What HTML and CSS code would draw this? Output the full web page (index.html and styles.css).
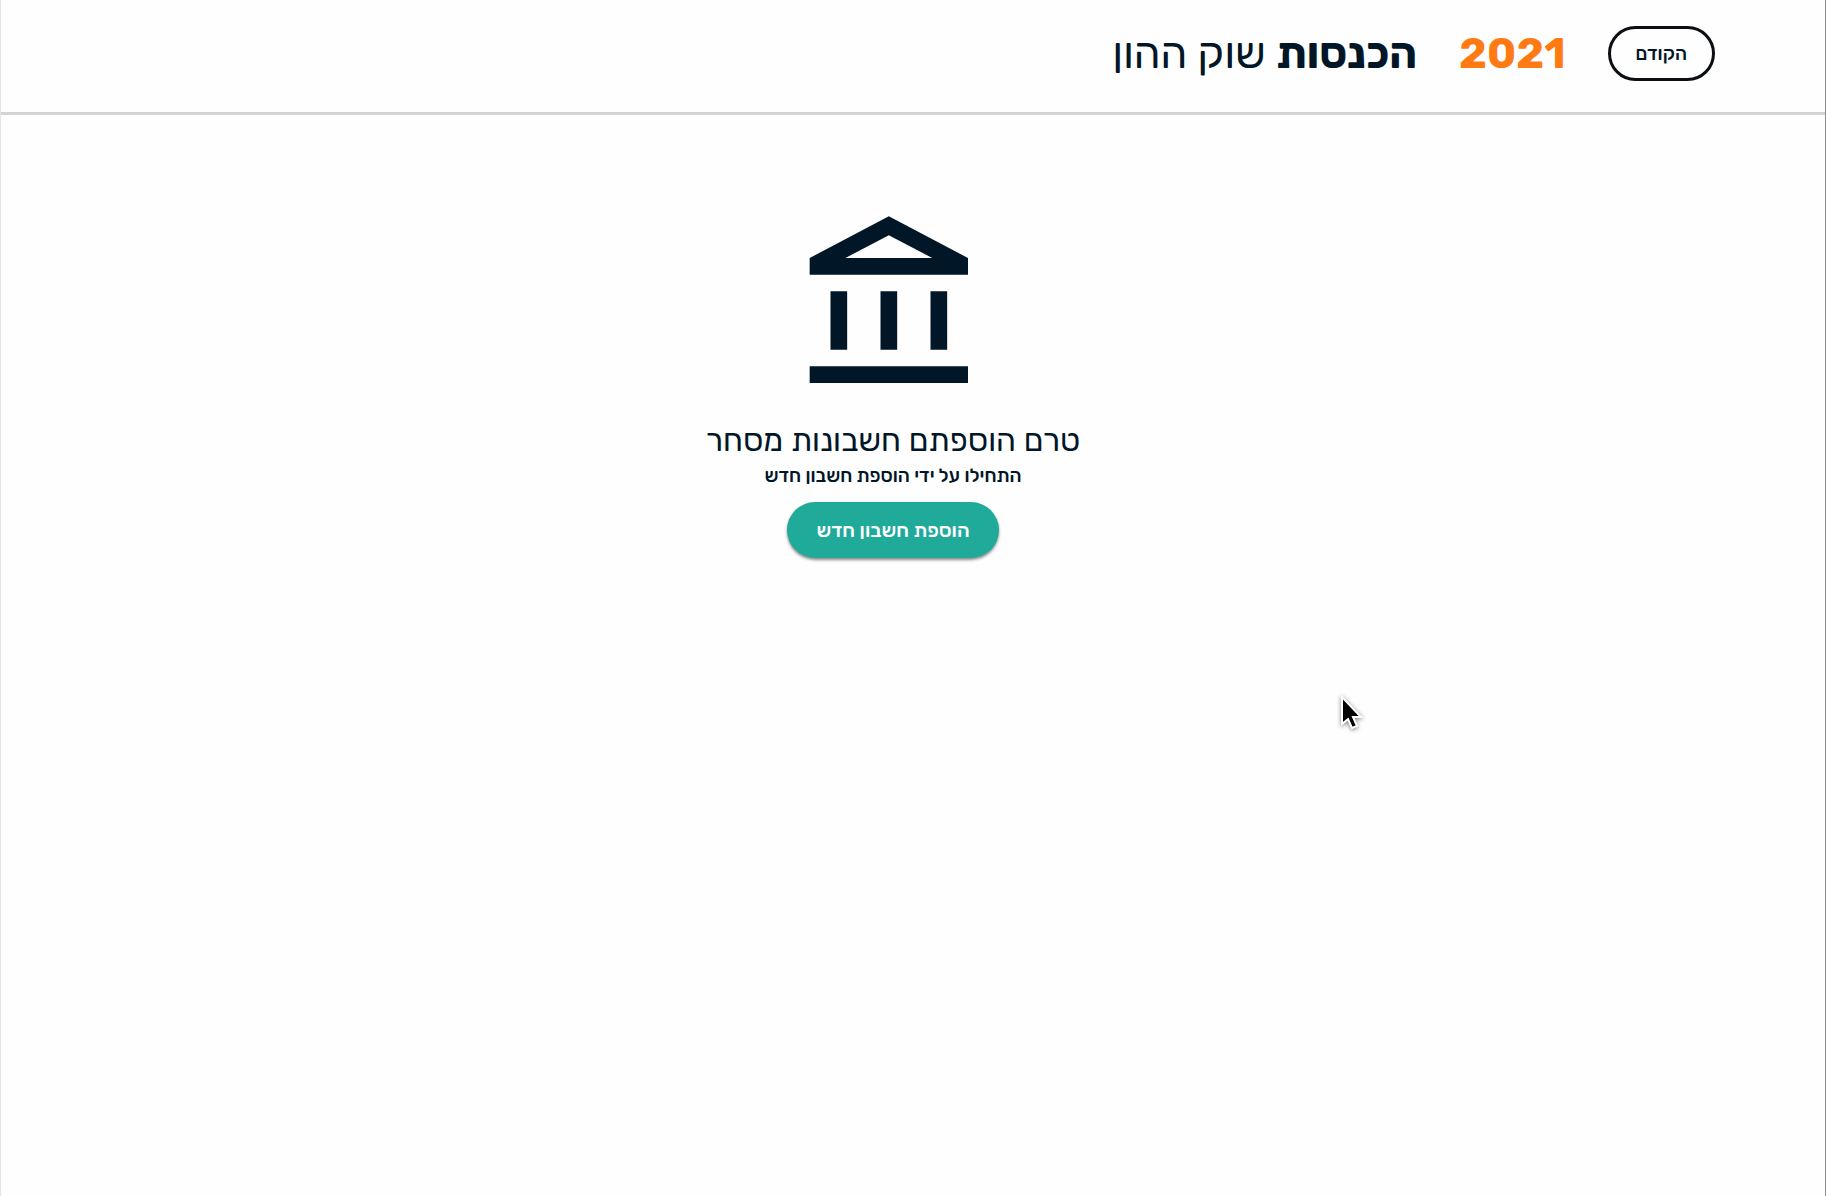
FILE: index.html
```html
<!DOCTYPE html>
<html lang="he" dir="rtl">
<head>
    <meta charset="UTF-8">
    <meta name="viewport" content="width=device-width, initial-scale=1.0">
    <title>הכנסות שוק ההון</title>
    <link rel="stylesheet" href="styles.css">
</head>
<body>
    <header class="header">
        <button type="button" class="btn-back">הקודם</button>
        <span class="year">2021</span>
        <h1 class="title"><strong>הכנסות</strong> שוק ההון</h1>
    </header>

    <main class="empty-state">
        <svg class="bank-icon" viewBox="0 0 24 24" aria-hidden="true">
            <path d="M6.5 10h-2v7h2v-7zm6 0h-2v7h2v-7zm8.5 9H2v2h19v-2zm-2.5-9h-2v7h2v-7zm-7-6.74L16.71 6H6.29l5.21-2.74m0-2.26L2 6v2h19V6l-9.5-5z"/>
        </svg>
        <h2>טרם הוספתם חשבונות מסחר</h2>
        <p>התחילו על ידי הוספת חשבון חדש</p>
        <button type="button" class="btn-add">הוספת חשבון חדש</button>
    </main>

    <svg class="cursor" viewBox="0 0 24 36" aria-hidden="true">
        <path d="M2 2v27l6-5 4 9 5-2-4-9h8z"/>
    </svg>
</body>
</html>
```

FILE: styles.css
```css
* {
    box-sizing: border-box;
}
body {
    font-family: 'Rubik', 'Open Sans', sans-serif;
    background-color: #fefefe;
    color: #011627;
    margin: 0;
    min-height: 100vh;
    border-left: 1px solid #e4e4e4;
    border-right: 1px solid #8c8c8c;
}
button {
    font-family: inherit;
    font-weight: 500;
    cursor: pointer;
}
.header {
    display: flex;
    align-items: center;
    gap: 42px;
    padding: 26px 110px 31px;
    border-bottom: 3px solid #d3d3d3;
}
.btn-back {
    height: 55px;
    padding: 0 25px;
    background-color: transparent;
    border: 3px solid #0b0f14;
    border-radius: 28px;
    color: #011627;
    font-size: 19px;
}
.year {
    color: #ff7a12;
    font-size: 43px;
    font-weight: 700;
    line-height: 52px;
}
.title {
    margin: 0;
    font-size: 43px;
    font-weight: 400;
    line-height: 52px;
}
.title strong {
    font-weight: 700;
}
.empty-state {
    display: flex;
    flex-direction: column;
    align-items: center;
    padding: 93px 40px 40px 0;
}
.bank-icon {
    width: 200px;
    height: 200px;
    fill: #011627;
}
.empty-state h2 {
    margin: 12px 0 0;
    font-size: 32px;
    font-weight: 400;
    line-height: 40px;
}
.empty-state p {
    margin: 4px 0 14px;
    font-size: 19px;
    font-weight: 500;
    line-height: 24px;
}
.btn-add {
    height: 56px;
    padding: 0 29px;
    background-color: #20aa99;
    border: none;
    border-radius: 28px;
    box-shadow: 0 2px 3px rgba(0, 0, 0, 0.45);
    color: #ffffff;
    font-size: 20px;
}
.cursor {
    position: absolute;
    top: 695px;
    left: 1340px;
    width: 24px;
    height: 36px;
    fill: #000000;
    stroke: #ffffff;
    stroke-width: 2;
    filter: drop-shadow(0 1px 2px rgba(0, 0, 0, 0.5));
    pointer-events: none;
}
```
